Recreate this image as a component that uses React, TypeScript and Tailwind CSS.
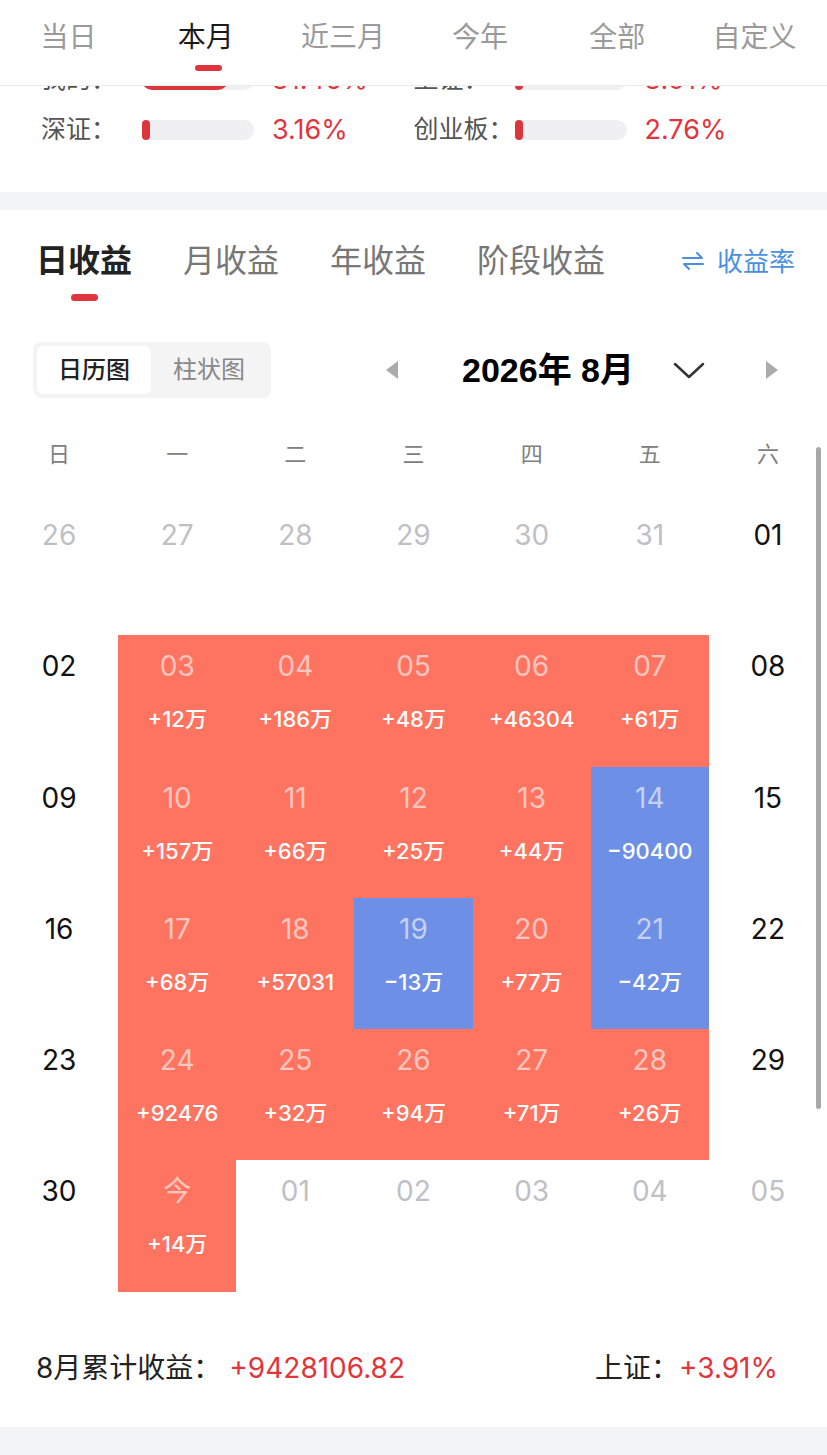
import React from 'react'

const TOP_TABS = ['当日', '本月', '近三月', '今年', '全部', '自定义']
const SUB_TABS = ['日收益', '月收益', '年收益', '阶段收益']
const WEEK = ['日', '一', '二', '三', '四', '五', '六']

type Cell = { d: string; kind: 'prev' | 'off' | 'up' | 'down' | 'next'; v?: string }

const ROWS: Cell[][] = [
  [
    { d: '26', kind: 'prev' }, { d: '27', kind: 'prev' }, { d: '28', kind: 'prev' },
    { d: '29', kind: 'prev' }, { d: '30', kind: 'prev' }, { d: '31', kind: 'prev' },
    { d: '01', kind: 'off' },
  ],
  [
    { d: '02', kind: 'off' },
    { d: '03', kind: 'up', v: '+12万' }, { d: '04', kind: 'up', v: '+186万' },
    { d: '05', kind: 'up', v: '+48万' }, { d: '06', kind: 'up', v: '+46304' },
    { d: '07', kind: 'up', v: '+61万' },
    { d: '08', kind: 'off' },
  ],
  [
    { d: '09', kind: 'off' },
    { d: '10', kind: 'up', v: '+157万' }, { d: '11', kind: 'up', v: '+66万' },
    { d: '12', kind: 'up', v: '+25万' }, { d: '13', kind: 'up', v: '+44万' },
    { d: '14', kind: 'down', v: '−90400' },
    { d: '15', kind: 'off' },
  ],
  [
    { d: '16', kind: 'off' },
    { d: '17', kind: 'up', v: '+68万' }, { d: '18', kind: 'up', v: '+57031' },
    { d: '19', kind: 'down', v: '−13万' }, { d: '20', kind: 'up', v: '+77万' },
    { d: '21', kind: 'down', v: '−42万' },
    { d: '22', kind: 'off' },
  ],
  [
    { d: '23', kind: 'off' },
    { d: '24', kind: 'up', v: '+92476' }, { d: '25', kind: 'up', v: '+32万' },
    { d: '26', kind: 'up', v: '+94万' }, { d: '27', kind: 'up', v: '+71万' },
    { d: '28', kind: 'up', v: '+26万' },
    { d: '29', kind: 'off' },
  ],
  [
    { d: '30', kind: 'off' },
    { d: '今', kind: 'up', v: '+14万' },
    { d: '01', kind: 'next' }, { d: '02', kind: 'next' }, { d: '03', kind: 'next' },
    { d: '04', kind: 'next' }, { d: '05', kind: 'next' },
  ],
]

function StatItem({ label, pct, fill }: { label: string; pct: string; fill: number }) {
  return (
    <div className="flex items-center w-[374px]">
      <span className="w-[101px] text-[25px] text-[#555]">{label}</span>
      <div className="w-[112px] h-[20px] rounded-full bg-[#f0f0f2]">
        <div className="h-full rounded-full bg-[#dd353c]" style={{ width: fill }} />
      </div>
      <span className="ml-[18px] text-[27px] text-[#e0353c]">{pct}</span>
    </div>
  )
}

export default function App() {
  return (
    <div className="w-[827px] h-[1455px] bg-[#f3f4f6] font-[Inter,'Noto_Sans_CJK_SC',sans-serif] overflow-hidden">
      {/* period tabs */}
      <div className="h-[86px] bg-white grid grid-cols-6 pr-[4px] border-b border-[#ececec] relative z-10">
        {TOP_TABS.map((t, i) => (
          <div key={t} className="flex flex-col items-center pt-[16px]">
            <span className={`text-[28px] leading-[42px] ${i === 1 ? 'text-[#1a1a1a]' : 'text-[#9a9a9a]'}`}>{t}</span>
            {i === 1 && <div className="mt-[7px] w-[27px] h-[6px] rounded-full bg-[#e0353c] translate-x-[3px]" />}
          </div>
        ))}
      </div>

      {/* index compare (scrolled under header) */}
      <div className="h-[106px] bg-white overflow-hidden">
        <div className="-mt-[31px] px-[41px]">
          <div className="h-[50px] flex items-center">
            <StatItem label="我的：" pct="31.46%" fill={86} />
            <StatItem label="上证：" pct="3.91%" fill={8} />
          </div>
          <div className="h-[50px] flex items-center">
            <StatItem label="深证：" pct="3.16%" fill={8} />
            <StatItem label="创业板：" pct="2.76%" fill={8} />
          </div>
        </div>
      </div>

      <div className="h-[18px]" />

      {/* profit section */}
      <div className="bg-white h-[1217px] relative">
        <div className="flex items-start px-[36px] pt-[29px]">
          <div className="flex gap-[51px]">
            {SUB_TABS.map((t, i) => (
              <div key={t} className="flex flex-col items-center">
                <span className={`text-[32px] leading-[44px] ${i === 0 ? 'font-bold text-[#222]' : 'text-[#777]'}`}>{t}</span>
                {i === 0 && <div className="mt-[11px] w-[27px] h-[7px] rounded-full bg-[#e0353c]" />}
              </div>
            ))}
          </div>
          <div className="ml-auto -mr-[4px] flex items-center gap-[12px] h-[44px] text-[#4a8fe0]">
            <svg width="24" height="20" viewBox="0 0 24 20" fill="none" stroke="currentColor" strokeWidth="2" strokeLinecap="round" strokeLinejoin="round">
              <path d="M2 7 H21 L16 2" />
              <path d="M22 13 H3 L8 18" />
            </svg>
            <span className="text-[26px]">收益率</span>
          </div>
        </div>

        {/* view toggle + month nav */}
        <div className="flex items-center px-[33px] mt-[41px] h-[56px]">
          <div className="flex p-[4px] bg-[#f4f4f5] rounded-[8px] h-[56px]">
            <div className="w-[114px] bg-white rounded-[6px] flex items-center justify-center text-[24px] font-medium text-[#222]">日历图</div>
            <div className="w-[116px] flex items-center justify-center text-[24px] text-[#888]">柱状图</div>
          </div>
          <svg className="ml-[114px]" width="14" height="20" viewBox="0 0 14 20">
            <polygon points="13,1 13,19 1,10" fill="#ababab" />
          </svg>
          <span className="ml-[63px] w-[176px] text-[34px] font-bold text-black font-['Liberation_Sans','Noto_Sans_CJK_SC',sans-serif]">2026年 8月</span>
          <svg className="ml-[35px]" width="32" height="18" viewBox="0 0 32 18" fill="none" stroke="#333" strokeWidth="2.5" strokeLinecap="round" strokeLinejoin="round">
            <polyline points="2,3 16,16 30,3" />
          </svg>
          <svg className="ml-[60px]" width="14" height="20" viewBox="0 0 14 20">
            <polygon points="1,1 1,19 13,10" fill="#ababab" />
          </svg>
        </div>

        {/* weekdays */}
        <div className="grid grid-cols-7 mt-[36px] mb-[30px]">
          {WEEK.map(w => (
            <div key={w} className="text-center text-[22px] leading-[40px] text-[#808080]">{w}</div>
          ))}
        </div>

        {/* calendar */}
        <div className="grid grid-cols-7">
          {ROWS.flat().map((c, i) => {
            const bg = c.kind === 'up' ? 'bg-[#fe7460]' : c.kind === 'down' ? 'bg-[#6e8fe6]' : ''
            const num =
              c.kind === 'up' || c.kind === 'down'
                ? 'text-white/60'
                : c.kind === 'off'
                  ? 'text-[#111]'
                  : 'text-[#bfc0c6]'
            return (
              <div key={i} className={`h-[131.3px] flex flex-col items-center pt-[12px] ${bg}`}>
                <span className={`text-[28px] leading-[38px] ${num}`}>{c.d}</span>
                {c.v && <span className="mt-[19px] text-[22px] leading-[30px] font-medium text-white">{c.v}</span>}
              </div>
            )
          })}
        </div>

        {/* footer */}
        <div className="flex items-center px-[36px] pr-[49px] pt-[56px]">
          <span className="text-[28px] leading-[40px] text-[#222]">8月累计收益：</span>
          <span className="ml-[8px] text-[28px] leading-[40px] text-[#e0353c]">+9428106.82</span>
          <span className="ml-auto text-[28px] leading-[40px] text-[#222]">上证：</span>
          <span className="text-[28px] leading-[40px] text-[#e0353c]">+3.91%</span>
        </div>

        {/* scroll indicator */}
        <div className="absolute right-[6px] top-[237px] w-[5px] h-[662px] rounded-full bg-[#a8a8a8]" />
      </div>
    </div>
  )
}
